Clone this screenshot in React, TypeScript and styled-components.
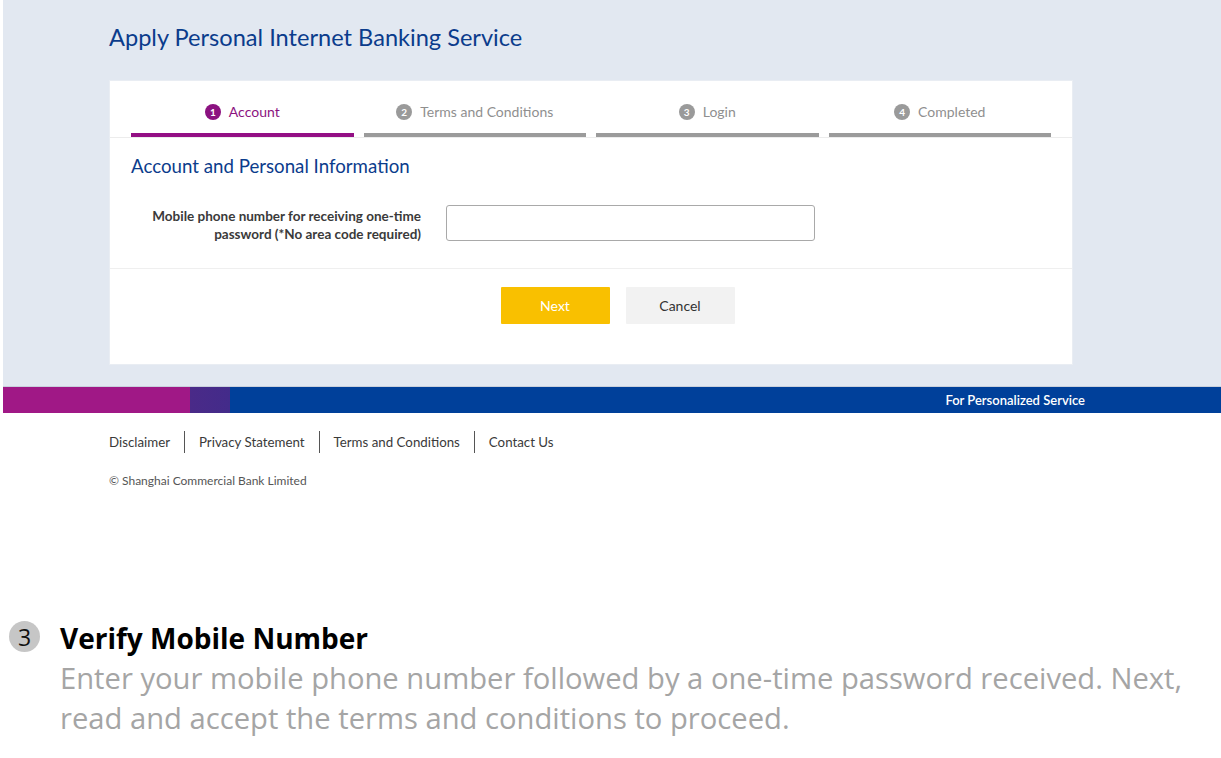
import styled, { createGlobalStyle } from "styled-components";

const GlobalStyle = createGlobalStyle`
  html, body {
    margin: 0;
    padding: 0;
    background: #ffffff;
  }
  body {
    font-family: Lato, "Liberation Sans", sans-serif;
  }
`;

const steps = [
  { n: 1, label: "Account" },
  { n: 2, label: "Terms and Conditions" },
  { n: 3, label: "Login" },
  { n: 4, label: "Completed" },
];

const links = ["Disclaimer", "Privacy Statement", "Terms and Conditions", "Contact Us"];

export default function App() {
  return (
    <Page>
      <GlobalStyle />
      <Shot>
        <Hero>
          <Inner>
            <PageTitle>Apply Personal Internet Banking Service</PageTitle>
            <Card>
              <Stepper>
                {steps.map((s) => (
                  <Step key={s.n} $active={s.n === 1}>
                    <StepNum $active={s.n === 1}>{s.n}</StepNum>
                    {s.label}
                  </Step>
                ))}
              </Stepper>
              <FormBody>
                <SectionTitle>Account and Personal Information</SectionTitle>
                <FieldRow>
                  <FieldLabel>
                    Mobile phone number for receiving one-time
                    <br />
                    password (*No area code required)
                  </FieldLabel>
                  <TextInput type="text" />
                </FieldRow>
              </FormBody>
              <Actions>
                <Button $primary>Next</Button>
                <Button>Cancel</Button>
              </Actions>
            </Card>
          </Inner>
        </Hero>
        <Band>
          <BandMagenta />
          <BandFade />
          <BandBlue>For Personalized Service</BandBlue>
        </Band>
        <Footer>
          <LinkRow>
            {links.map((l) => (
              <FooterLink key={l}>{l}</FooterLink>
            ))}
          </LinkRow>
          <Copyright>© Shanghai Commercial Bank Limited</Copyright>
        </Footer>
      </Shot>

      <Caption>
        <CaptionNum>3</CaptionNum>
        <CaptionText>
          <CaptionTitle>Verify Mobile Number</CaptionTitle>
          <CaptionBody>
            Enter your mobile phone number followed by a one-time password received. Next,
            <br />
            read and accept the terms and conditions to proceed.
          </CaptionBody>
        </CaptionText>
      </Caption>
    </Page>
  );
}

const Page = styled.div`
  width: 1221px;
  height: 758px;
  overflow: hidden;
`;

const Shot = styled.div`
  margin-left: 3px;
`;

const Hero = styled.div`
  background: #e2e8f1;
  height: 387px;
  border-bottom: 1px solid #c9d0dc;
  box-sizing: border-box;
`;

const Inner = styled.div`
  width: 964px;
  margin-left: 106px;
  padding-top: 22px;
`;

const PageTitle = styled.h1`
  margin: 0 0 27px;
  font-size: 23.6px;
  line-height: 31px;
  font-weight: 400;
  color: #0b3c8c;
`;

const Card = styled.div`
  background: #fff;
  border: 1px solid #e9edf3;
  height: 285px;
  box-sizing: border-box;
`;

const Stepper = styled.div`
  display: grid;
  grid-template-columns: repeat(4, 1fr);
  gap: 10px;
  padding: 0 21px;
  border-bottom: 1px solid #ececec;
`;

const Step = styled.div<{ $active?: boolean }>`
  display: flex;
  align-items: center;
  justify-content: center;
  gap: 8px;
  padding-top: 9px;
  box-sizing: border-box;
  height: 56px;
  border-bottom: 4px solid ${(p) => (p.$active ? "#930f84" : "#9b9b9b")};
  font-size: 14px;
  color: ${(p) => (p.$active ? "#8b1280" : "#8f8f8f")};
`;

const StepNum = styled.span<{ $active?: boolean }>`
  display: inline-flex;
  align-items: center;
  justify-content: center;
  width: 16px;
  height: 16px;
  border-radius: 50%;
  background: ${(p) => (p.$active ? "#8b1280" : "#9a9a9a")};
  color: #fff;
  font-size: 10px;
  font-weight: 700;
`;

const FormBody = styled.div`
  padding: 16px 21px 25px;
  border-bottom: 1px solid #efefef;
`;

const SectionTitle = styled.h2`
  margin: 0 0 25px;
  font-size: 18.7px;
  line-height: 24px;
  font-weight: 400;
  color: #0b3c8c;
`;

const FieldRow = styled.div`
  display: flex;
  align-items: center;
  gap: 25px;
`;

const FieldLabel = styled.label`
  width: 290px;
  text-align: right;
  font-size: 13.5px;
  line-height: 18px;
  font-weight: 700;
  color: #3a3a3a;
  margin-top: 4px;
`;

const TextInput = styled.input`
  width: 369px;
  height: 36px;
  box-sizing: border-box;
  border: 1px solid #a9a9a9;
  border-radius: 3px;
  background: #fff;
`;

const Actions = styled.div`
  display: flex;
  justify-content: center;
  gap: 16px;
  padding: 18px 0 0 53px;
`;

const Button = styled.button<{ $primary?: boolean }>`
  width: 109px;
  height: 37px;
  border: none;
  border-radius: 1px;
  font-family: Lato, "Liberation Sans", sans-serif;
  font-size: 14px;
  background: ${(p) => (p.$primary ? "#f9c000" : "#f2f2f2")};
  color: ${(p) => (p.$primary ? "#ffffff" : "#333333")};
`;

const Band = styled.div`
  display: flex;
  height: 26px;
`;

const BandMagenta = styled.div`
  width: 187px;
  background: #a01886;
`;

const BandFade = styled.div`
  width: 40px;
  background: linear-gradient(to right, #4a2a88, #432b8a);
`;

const BandBlue = styled.div`
  flex: 1;
  background: #00409a;
  display: flex;
  align-items: center;
  justify-content: flex-end;
  padding-right: 136px;
  color: #fff;
  font-size: 13px;
  font-weight: 600;
`;

const Footer = styled.div`
  padding: 18px 0 0 106px;
`;

const LinkRow = styled.div`
  display: flex;
  align-items: center;
`;

const FooterLink = styled.a`
  font-size: 13.3px;
  line-height: 22px;
  color: #3a3a3a;
  padding: 0 14px;
  border-left: 1px solid #555;

  &:first-child {
    padding-left: 0;
    border-left: none;
  }
`;

const Copyright = styled.div`
  margin-top: 20px;
  font-size: 12px;
  color: #555;
`;

const Caption = styled.div`
  display: flex;
  align-items: flex-start;
  gap: 20px;
  margin-top: 130px;
  padding-left: 9px;
`;

const CaptionNum = styled.div`
  flex: none;
  width: 31px;
  height: 31px;
  margin-top: 3px;
  border-radius: 50%;
  background: #c6c6c6;
  color: #111;
  display: flex;
  align-items: center;
  justify-content: center;
  font-family: "Open Sans", "Liberation Sans", sans-serif;
  font-size: 23px;
`;

const CaptionText = styled.div`
  font-family: "Open Sans", "Liberation Sans", sans-serif;
`;

const CaptionTitle = styled.div`
  font-size: 28px;
  line-height: 40px;
  font-weight: 700;
  color: #000;
`;

const CaptionBody = styled.div`
  font-size: 29.2px;
  line-height: 40px;
  color: #a5a5a5;
  white-space: nowrap;
`;
